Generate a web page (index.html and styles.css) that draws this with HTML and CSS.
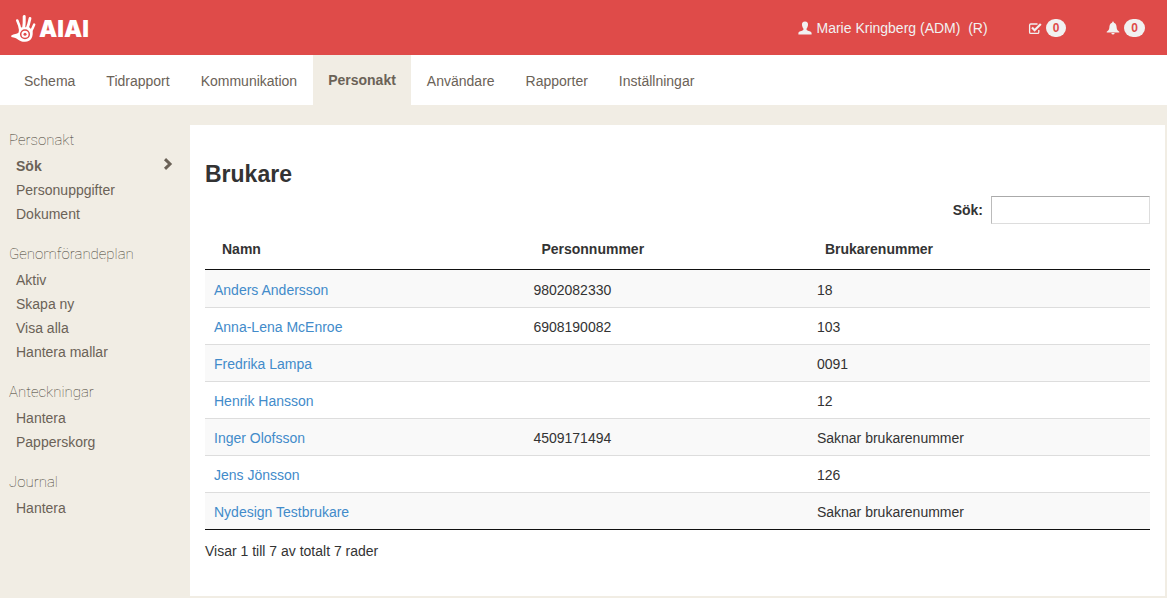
FILE: index.html
```
<!DOCTYPE html>
<html lang="sv">
  <head>
    <meta charset="UTF-8">
    <title>Brukare</title>
    <link rel="stylesheet" href="styles.css">
  </head>
  <body>
    <header class="topbar">
      <a class="logo" href="#">
        <svg class="logo-hand" viewBox="0 0 26 28" aria-hidden="true">
          <g fill="none" stroke="#fff" stroke-linecap="round">
            <path stroke-width="2.6" d="M9.5 17 Q8.5 11 6.3 6.5"/>
            <path stroke-width="3" d="M12.5 16 Q13.5 9 13.2 2.5"/>
            <path stroke-width="2.8" d="M15.5 16 Q18 10 19 4.5"/>
            <path stroke-width="2.4" d="M19 19 Q21.5 15 23.2 10.5"/>
          </g>
          <path fill="#fff" d="M0.3 21.6 C3 19.4 6 20.4 7.6 18.5 L8.3 13.5 L18 13 L21.5 16.5 C22.5 22 20.5 27.8 14 27.8 C7.5 27.8 7 23.6 0.3 22.9 Z"/>
          <circle cx="14" cy="20.2" r="4.3" fill="none" stroke="#df4b49" stroke-width="1.5"/>
          <circle cx="14" cy="20.2" r="1.5" fill="#df4b49"/>
        </svg>
        <span>AIAI</span>
      </a>
      <div class="user-menu">
        <a class="user" href="#">
          <svg class="icon" viewBox="0 0 14 14" aria-hidden="true">
            <path fill="currentColor" d="M7 0.5 C9.3 0.5 10.2 2 10 4 C9.9 5.6 9.2 6.8 8.6 7.5 V9 C10 10 13.5 10.4 13.6 12 V13.5 H0.4 V12 C0.5 10.4 4 10 5.4 9 V7.5 C4.8 6.8 4.1 5.6 4 4 C3.8 2 4.7 0.5 7 0.5 Z"/>
          </svg>
          <span>Marie Kringberg (ADM)&nbsp; (R)</span>
        </a>
        <a class="notice" href="#" aria-label="Uppgifter">
          <svg class="icon" viewBox="0 0 14 14" aria-hidden="true">
            <path fill="none" stroke="currentColor" stroke-width="1.3" d="M9.5 3 H2.8 Q1.6 3 1.6 4.2 V11.2 Q1.6 12.4 2.8 12.4 H9.6 Q10.8 12.4 10.8 11.2 V9"/>
            <path fill="none" stroke="currentColor" stroke-width="2.2" d="M4 6.5 L6.6 9.2 L12.8 3"/>
          </svg>
          <span class="badge">0</span>
        </a>
        <a class="notice" href="#" aria-label="Aviseringar">
          <svg class="icon" viewBox="0 0 14 14" aria-hidden="true">
            <path fill="currentColor" d="M7 0.5 Q7.9 0.5 7.9 1.8 C10.3 2.6 10.5 4.8 10.7 7 C10.9 8.9 12 9.8 13.3 10.8 V11.5 H0.7 V10.8 C2 9.8 3.1 8.9 3.3 7 C3.5 4.8 3.7 2.6 6.1 1.8 Q6.1 0.5 7 0.5 Z M5.3 12 H8.7 Q8.4 13.6 7 13.6 Q5.6 13.6 5.3 12 Z"/>
          </svg>
          <span class="badge">0</span>
        </a>
      </div>
    </header>

    <nav class="main-nav">
      <a href="#">Schema</a>
      <a href="#">Tidrapport</a>
      <a href="#">Kommunikation</a>
      <a class="active" href="#">Personakt</a>
      <a href="#">Användare</a>
      <a href="#">Rapporter</a>
      <a href="#">Inställningar</a>
    </nav>

    <div class="page">
      <aside class="sidebar">
        <h2>Personakt</h2>
        <ul>
          <li class="active">
            <a href="#">Sök</a>
            <svg class="chevron" viewBox="0 0 10 12" aria-hidden="true">
              <path fill="none" stroke="currentColor" stroke-width="3" d="M2 1.2 L7 6 L2 10.8"/>
            </svg>
          </li>
          <li><a href="#">Personuppgifter</a></li>
          <li><a href="#">Dokument</a></li>
        </ul>
        <h2>Genomförandeplan</h2>
        <ul>
          <li><a href="#">Aktiv</a></li>
          <li><a href="#">Skapa ny</a></li>
          <li><a href="#">Visa alla</a></li>
          <li><a href="#">Hantera mallar</a></li>
        </ul>
        <h2>Anteckningar</h2>
        <ul>
          <li><a href="#">Hantera</a></li>
          <li><a href="#">Papperskorg</a></li>
        </ul>
        <h2>Journal</h2>
        <ul>
          <li><a href="#">Hantera</a></li>
        </ul>
      </aside>

      <main class="content">
        <h1>Brukare</h1>
        <div class="filter">
          <label for="search">Sök:</label>
          <input id="search" type="search">
        </div>
        <table class="clients">
          <thead>
            <tr>
              <th class="col-name">Namn</th>
              <th class="col-pnr">Personnummer</th>
              <th>Brukarenummer</th>
            </tr>
          </thead>
          <tbody>
            <tr><td><a href="#">Anders Andersson</a></td><td>9802082330</td><td>18</td></tr>
            <tr><td><a href="#">Anna-Lena McEnroe</a></td><td>6908190082</td><td>103</td></tr>
            <tr><td><a href="#">Fredrika Lampa</a></td><td></td><td>0091</td></tr>
            <tr><td><a href="#">Henrik Hansson</a></td><td></td><td>12</td></tr>
            <tr><td><a href="#">Inger Olofsson</a></td><td>4509171494</td><td>Saknar brukarenummer</td></tr>
            <tr><td><a href="#">Jens Jönsson</a></td><td></td><td>126</td></tr>
            <tr><td><a href="#">Nydesign Testbrukare</a></td><td></td><td>Saknar brukarenummer</td></tr>
          </tbody>
        </table>
        <p class="info">Visar 1 till 7 av totalt 7 rader</p>
      </main>
    </div>
  </body>
</html>
```
FILE: styles.css
```
* {
  box-sizing: border-box;
}

body {
  margin: 0;
  background: #f1ede4;
  color: #333;
  font-family: "Helvetica Neue", "Liberation Sans", Arial, sans-serif;
  font-size: 14px;
  line-height: 20px;
}

a {
  color: #428bca;
  text-decoration: none;
}

/* top bar */
.topbar {
  display: flex;
  align-items: center;
  justify-content: space-between;
  height: 55px;
  padding: 0 22px 0 11px;
  background: #df4b49;
}

.logo {
  display: flex;
  align-items: center;
  gap: 2px;
  color: #fff;
  font-family: Inter, "Liberation Sans", sans-serif;
  font-size: 23px;
  font-weight: 900;
  line-height: 28px;
}

.logo span {
  padding-top: 2px;
}

.logo-hand {
  width: 26px;
  height: 28px;
}

.user-menu,
.user,
.notice {
  display: flex;
  align-items: center;
}

.user-menu {
  gap: 40px;
}

.user,
.notice {
  gap: 4px;
  color: #f1f1f1;
}

.icon {
  width: 14px;
  height: 14px;
}

.badge {
  padding: 3px 7px;
  border-radius: 10px;
  background: #f1f1f1;
  color: #df4b49;
  font-size: 12px;
  font-weight: bold;
  line-height: 12px;
}

/* main navigation */
.main-nav {
  display: flex;
  gap: 1px;
  height: 50px;
  padding-left: 9px;
  background: #fff;
}

.main-nav a {
  padding: 16px 15px 14px;
  color: #6b6257;
}

.main-nav .active {
  padding-top: 15px;
  background: #f1ede4;
  font-weight: bold;
}

.page {
  display: flex;
  padding: 20px 2px 2px 0;
}

/* sidebar */
.sidebar {
  flex: 0 0 190px;
  padding: 4px 17px 0 9px;
}

.sidebar h2 {
  margin: 0;
  color: #40382e;
  font-family: Roboto, "Helvetica Neue", sans-serif;
  font-size: 15px;
  font-weight: 100;
  line-height: 22px;
}

.sidebar ul {
  margin: 3px 0 17px;
  padding: 0 0 0 7px;
  list-style: none;
}

.sidebar li {
  display: flex;
  align-items: center;
  justify-content: space-between;
  height: 24px;
}

.sidebar li a,
.chevron {
  color: #6b6257;
}

.sidebar .active {
  font-weight: bold;
}

.chevron {
  width: 10px;
  height: 12px;
  margin-bottom: 4px;
}

/* content */
.content {
  flex: 1;
  padding: 35px 15px;
  background: #fff;
}

h1 {
  margin: 0 0 8px;
  font-size: 23px;
  line-height: 28px;
}

.filter {
  display: flex;
  align-items: center;
  justify-content: flex-end;
  gap: 8px;
  font-weight: bold;
}

.filter input {
  width: 159px;
  height: 28px;
  border: 1px solid #ddd;
  border-top-color: #aaa;
  border-left-color: #bbb;
  background: #fff;
  font: inherit;
  appearance: none;
}

.clients {
  width: 100%;
  margin-top: 5px;
  border-bottom: 1px solid #111;
  border-collapse: separate;
  border-spacing: 0;
  table-layout: fixed;
}

.clients th {
  padding: 10px 17px;
  border-bottom: 1px solid #111;
  text-align: left;
}

.col-name {
  width: 33.8%;
}

.col-pnr {
  width: 30%;
}

.clients td {
  height: 37px;
  padding: 9px 9px 7px;
  border-top: 1px solid #ddd;
}

.clients tbody tr:first-child td {
  border-top: none;
}

.clients tbody tr:nth-child(odd) {
  background: #f9f9f9;
}

.info {
  margin: 11px 0 0;
}
```
